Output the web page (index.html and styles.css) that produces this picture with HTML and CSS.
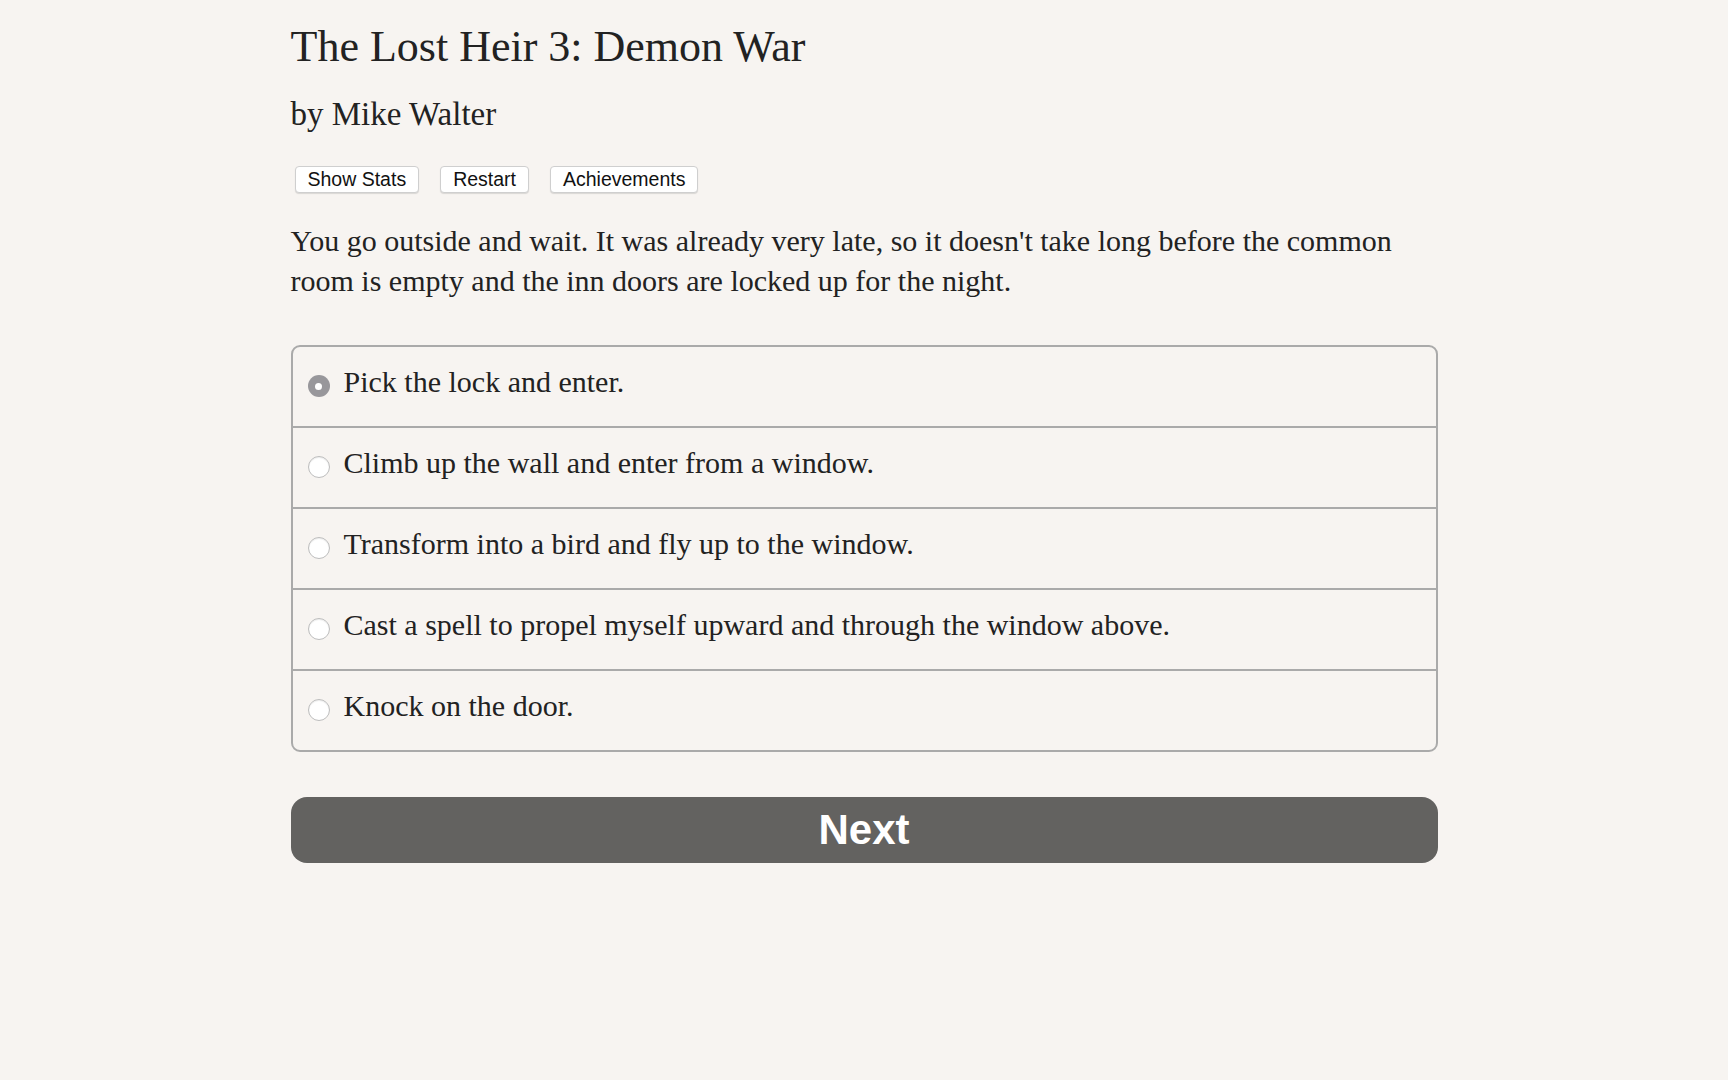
FILE: index.html
```
<!DOCTYPE HTML>
<html lang=en>
	<head>
		<meta charset=utf-8>
		<meta name=viewport content="width=device-width, initial-scale=1.0">
		<title>The Lost Heir 3: Demon War</title>
		<link rel="stylesheet" href="styles.css">
	</head>
	<body>
		<div class=container>
			<h1 class=title>The Lost Heir 3: Demon War</h1>
			<h2 class=author>by Mike Walter</h2>
			<div class=toolbar>
				<button class=toolButton type=button>Show Stats</button>
				<button class=toolButton type=button>Restart</button>
				<button class=toolButton type=button>Achievements</button>
			</div>
			<p class=story>You go outside and wait. It was already very late, so it doesn't take long before the common room is empty and the inn doors are locked up for the night.</p>
			<div class=choices>
				<label class="choice checked"><span class=radio></span><span>Pick the lock and enter.</span></label>
				<label class=choice><span class=radio></span><span>Climb up the wall and enter from a window.</span></label>
				<label class=choice><span class=radio></span><span>Transform into a bird and fly up to the window.</span></label>
				<label class=choice><span class=radio></span><span>Cast a spell to propel myself upward and through the window above.</span></label>
				<label class=choice><span class=radio></span><span>Knock on the door.</span></label>
			</div>
			<button class=nextButton type=button>Next</button>
		</div>
	</body>
</html>
```
FILE: styles.css
```
html, body {
	margin: 0;
	padding: 0;
	background-color: #f7f4f1;
	color: #222;
}

.container {
	max-width: 1147px;
	margin: auto;
	padding-top: 17px;
	font-family: "Liberation Serif", serif;
}

.title {
	margin: 0;
	font-size: 44px;
	line-height: 60px;
	font-weight: normal;
}

.author {
	margin: 15px 0 0;
	font-size: 33px;
	line-height: 44px;
	font-weight: normal;
}

.toolbar {
	display: flex;
	gap: 21px;
	margin-top: 30px;
	padding-left: 4px;
}

.toolButton {
	height: 27px;
	padding: 0 12px;
	font-family: "Liberation Sans", sans-serif;
	font-size: 19.5px;
	color: #111;
	background-color: #fff;
	border: 1px solid #cfcfcf;
	border-radius: 4px;
	box-shadow: 0 1px 1px rgba(0, 0, 0, 0.12);
}

.story {
	margin: 28px 0 0;
	font-size: 30px;
	line-height: 40px;
}

.choices {
	margin-top: 44px;
	border: 2px solid #aaa;
	border-radius: 9px;
}

.choice {
	display: flex;
	align-items: flex-start;
	gap: 14px;
	height: 81px;
	box-sizing: border-box;
	padding: 15px 15px 0;
	font-size: 30px;
	line-height: 40px;
	border-top: 2px solid #aaa;
}

.choice:first-child {
	height: 79px;
	border-top: 0;
}

.radio {
	flex: none;
	width: 22px;
	height: 22px;
	margin-top: 13px;
	box-sizing: border-box;
	border: 1px solid #bdbdbd;
	border-radius: 50%;
	background-color: #fff;
	box-shadow: inset 0 1px 1px rgba(0, 0, 0, 0.08);
}

.checked .radio {
	border: 0;
	background-color: #98979b;
	box-shadow: none;
	display: flex;
	align-items: center;
	justify-content: center;
}

.checked .radio::after {
	content: "";
	width: 7px;
	height: 7px;
	border-radius: 50%;
	background-color: #fff;
}

.nextButton {
	display: block;
	width: 100%;
	height: 66px;
	margin-top: 45px;
	font-family: "Liberation Sans", sans-serif;
	font-size: 42px;
	font-weight: bold;
	color: #fff;
	background-color: #636260;
	border: 0;
	border-radius: 16px;
}
```
